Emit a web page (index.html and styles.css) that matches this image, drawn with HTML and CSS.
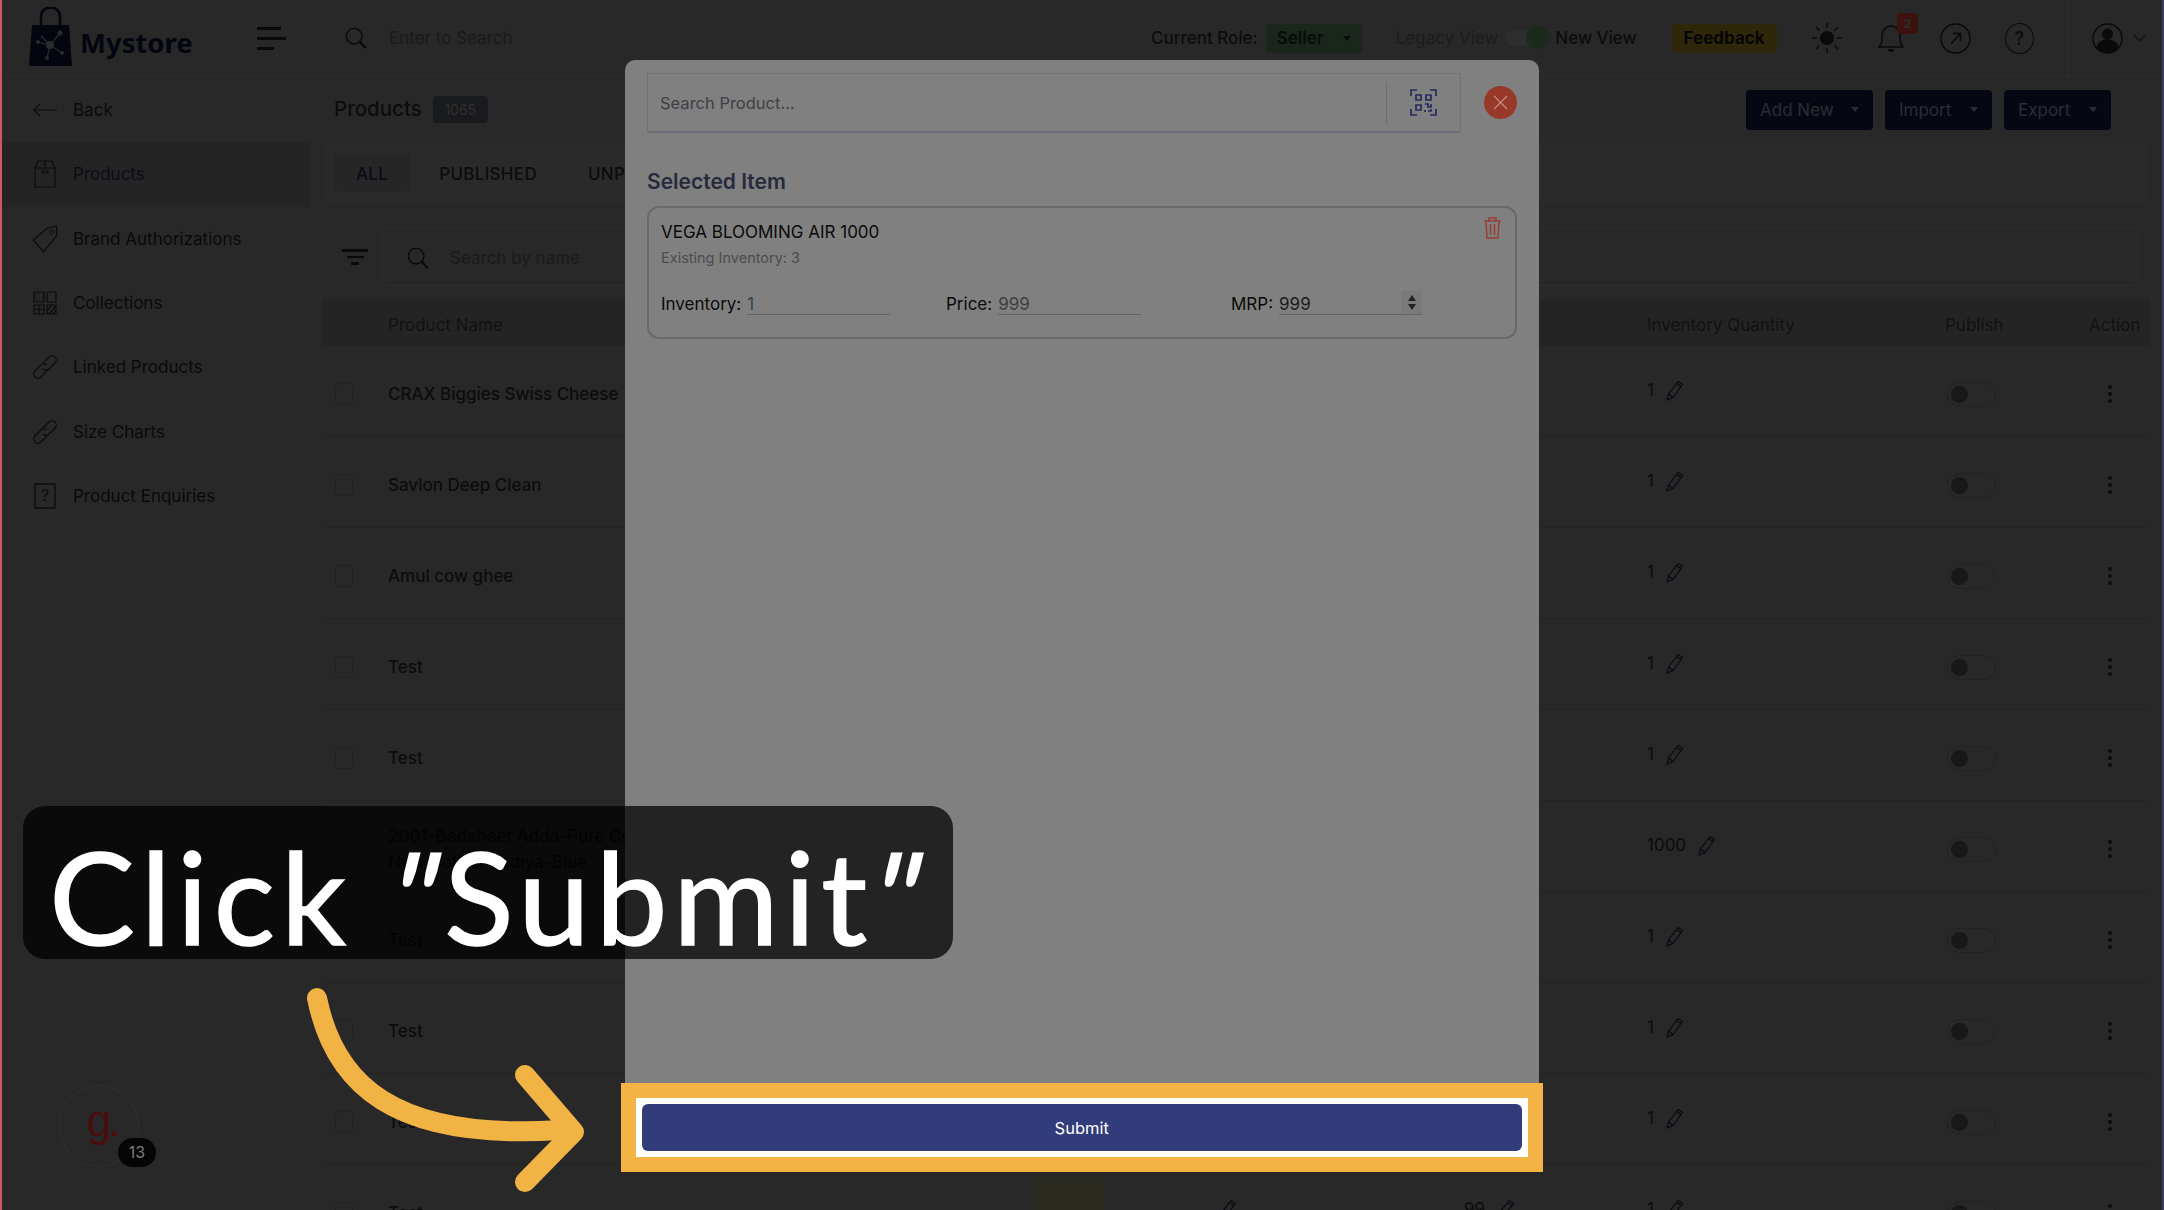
FILE: index.html
```html
<!DOCTYPE html>
<html lang="en">
<head>
  <meta charset="UTF-8" />
  <title>Mystore - Products</title>
  <link rel="stylesheet" href="styles.css">
</head>
<body>

  <svg class="defs" width="0" height="0">
    <symbol id="pencil" viewBox="0 0 18 22">
      <path d="M1 21l1.500-6L12 2.500l4.500 3L7 18.500zM2.500 15l4.500 3.500M10.500 4.500l4.500 3" fill="none" stroke="#0a0a14" stroke-width="1.200"/>
    </symbol>
    <symbol id="search" viewBox="0 0 24 24">
      <circle cx="10" cy="10" r="8.500" fill="none" stroke="#0a0a0a" stroke-width="1.500"/>
      <path d="M16 16l6.500 7" stroke="#0a0a0a" stroke-width="2.500"/>
    </symbol>
    <symbol id="dots" viewBox="0 0 6 20">
      <circle cx="3" cy="3" r="2" fill="#0c0c0c"/>
      <circle cx="3" cy="10" r="2" fill="#0c0c0c"/>
      <circle cx="3" cy="17" r="2" fill="#0c0c0c"/>
    </symbol>
    <symbol id="link" viewBox="0 0 26 26">
      <path d="M11 9l6-6a4 4 0 0 1 6 6l-6 6a4 4 0 0 1-6 0M15 17l-6 6a4 4 0 0 1-6-6l6-6a4 4 0 0 1 6 0" fill="none" stroke="#0c0c0c" stroke-width="1.200"/>
    </symbol>
  </svg>

  <div class="page">

    <!-- top bar -->
    <header class="topbar">
      <div class="brand">
        <svg class="brand-bag" width="43" height="59" viewBox="0 0 43 59">
          <path d="M12 18V9a9 8 0 0 1 19 0v9" fill="none" stroke="#04060f" stroke-width="2.500"/>
          <path d="M3 18h37l3 41H0z" fill="#04060f"/>
          <path d="M21 38L9 35M21 38l10-12M21 38l-9-9M21 38l12 8M21 38l-3 13" stroke="#2c2c2c" stroke-width="1.200"/>
          <circle cx="21" cy="38" r="4" fill="#2c2c2c"/>
          <circle cx="31" cy="26" r="2.500" fill="#2c2c2c"/>
          <circle cx="9" cy="35" r="2" fill="#2c2c2c"/>
          <circle cx="33" cy="46" r="2" fill="#2c2c2c"/>
          <circle cx="18" cy="51" r="2" fill="#2c2c2c"/>
        </svg>
        <span class="brand-name">Mystore</span>
        <div class="burger"><i></i><i></i><i></i></div>
      </div>
      <div class="top-search">
        <svg width="22" height="22"><use href="#search"/></svg>
        <span>Enter to Search</span>
      </div>
      <div class="top-tools">
        <span class="role-label">Current Role:</span>
        <span class="seller-btn">Seller <b class="caret"></b></span>
        <span class="legacy">Legacy View</span>
        <span class="view-toggle"><i></i></span>
        <span class="new-view">New View</span>
        <span class="feedback">Feedback</span>
        <svg class="sun" width="30" height="30" viewBox="0 0 30 30">
          <circle cx="15" cy="15" r="7" fill="#0a0a0a"/>
          <path d="M15 0v5M15 25v5M0 15h5M25 15h5M4 4l3.500 3.500M22.500 22.500L26 26M26 4l-3.500 3.500M7.500 22.500L4 26" stroke="#0a0a0a" stroke-width="1.500"/>
        </svg>
        <span class="bell">
          <svg width="26" height="30" viewBox="0 0 26 30">
            <path d="M1 24c3-3 3-6 3-11 0-6 4-10 9-10s9 4 9 10c0 5 0 8 3 11z" fill="none" stroke="#0a0a0a" stroke-width="1.500"/>
            <path d="M10 26h6a3 3 0 0 1-6 0z" fill="#0a0a0a"/>
          </svg>
          <em>2</em>
        </span>
        <svg class="round-icon" width="31" height="31" viewBox="0 0 31 31">
          <circle cx="15.500" cy="15.500" r="14.500" fill="none" stroke="#0a0a0a" stroke-width="1.500"/>
          <path d="M11 21l9-10M13 10.500h7.500V18" fill="none" stroke="#0a0a0a" stroke-width="1.500"/>
        </svg>
        <span class="help">?</span>
        <div class="user-box">
          <svg width="31" height="31" viewBox="0 0 31 31">
            <circle cx="15.500" cy="15.500" r="14.500" fill="none" stroke="#0a0a0a" stroke-width="1.500"/>
            <circle cx="15.500" cy="11" r="5.500" fill="#0a0a0a"/>
            <path d="M4.500 25a11 9 0 0 1 22 0 14 14 0 0 1-22 0z" fill="#0a0a0a"/>
          </svg>
          <svg width="13" height="8" viewBox="0 0 13 8"><path d="M1 1l5.500 6L12 1" fill="none" stroke="#111" stroke-width="1.200"/></svg>
        </div>
      </div>
    </header>

    <div class="main">

      <!-- sidebar -->
      <nav class="sidebar">
        <a class="nav-item">
          <svg width="24" height="14" viewBox="0 0 24 14"><path d="M24 7H1M7 1L1 7l6 6" fill="none" stroke="#0c0c0c" stroke-width="1.200"/></svg>
          Back
        </a>
        <a class="nav-item active">
          <svg width="24" height="28" viewBox="0 0 24 28"><path d="M2 8h20v19H2zM2 8l3-7h14l3 7M12 1v7M9 11h6v2H9z" fill="none" stroke="#0c0c0c" stroke-width="1.200"/></svg>
          Products
        </a>
        <a class="nav-item">
          <svg width="25" height="28" viewBox="0 0 25 28"><path d="M1 15L15 3l9-2v10L11 27z" fill="none" stroke="#0c0c0c" stroke-width="1.200"/><circle cx="19" cy="7" r="2" fill="none" stroke="#0c0c0c"/></svg>
          Brand Authorizations
        </a>
        <a class="nav-item">
          <svg width="24" height="24" viewBox="0 0 24 24" fill="none" stroke="#0c0c0c" stroke-width="1.200">
            <path d="M1 1h10v10H1zM14 1h9v10h-9zM1 14h10v9H1zM14 14h9v9h-9z"/>
            <path d="M3 3h1M6 3h1M9 3h1M3 6h1M6 6h1M9 6h1M3 9h1M6 9h1M9 9h1M6 14v9M1 18.500h10M14 20l5-6M16 23l7-8M20 23l3-4"/>
          </svg>
          Collections
        </a>
        <a class="nav-item">
          <svg width="26" height="26"><use href="#link"/></svg>
          Linked Products
        </a>
        <a class="nav-item">
          <svg width="26" height="26"><use href="#link"/></svg>
          Size Charts
        </a>
        <a class="nav-item">
          <svg width="22" height="26" viewBox="0 0 22 26"><path d="M1 1h20v24H1z" fill="none" stroke="#0c0c0c" stroke-width="1.300"/><text x="11" y="18" text-anchor="middle" class="enquiry-mark">?</text></svg>
          Product Enquiries
        </a>
      </nav>

      <!-- products list -->
      <section class="content">
        <div class="title-row">
          <h1>Products</h1>
          <span class="count">1065</span>
          <div class="actions">
            <span class="dark-btn">Add New <b class="caret"></b></span>
            <span class="dark-btn">Import <b class="caret"></b></span>
            <span class="dark-btn">Export <b class="caret"></b></span>
          </div>
        </div>

        <div class="tabs">
          <span class="tab selected">ALL</span>
          <span class="tab">PUBLISHED</span>
          <span class="tab">UNPUBLISHED</span>
        </div>

        <div class="filter-row">
          <div class="filter-icon"><i></i><i></i><i></i></div>
          <div class="filter-search">
            <svg width="22" height="22"><use href="#search"/></svg>
            <span>Search by name</span>
          </div>
        </div>

        <div class="tbl-row tbl-head">
          <span class="check"></span>
          <span class="span-four">Product Name</span>
          <span>Inventory Quantity</span>
          <span>Publish</span>
          <span>Action</span>
        </div>

        <div class="tbl-row">
          <span class="check"></span>
          <span class="name span-four">CRAX Biggies Swiss Cheese</span>
          <span class="qty">1 <svg width="18" height="22"><use href="#pencil"/></svg></span>
          <span class="switch"><i></i></span>
          <svg class="more" width="6" height="20"><use href="#dots"/></svg>
        </div>
        <div class="tbl-row">
          <span class="check"></span>
          <span class="name span-four">Savlon Deep Clean</span>
          <span class="qty">1 <svg width="18" height="22"><use href="#pencil"/></svg></span>
          <span class="switch"><i></i></span>
          <svg class="more" width="6" height="20"><use href="#dots"/></svg>
        </div>
        <div class="tbl-row">
          <span class="check"></span>
          <span class="name span-four">Amul cow ghee</span>
          <span class="qty">1 <svg width="18" height="22"><use href="#pencil"/></svg></span>
          <span class="switch"><i></i></span>
          <svg class="more" width="6" height="20"><use href="#dots"/></svg>
        </div>
        <div class="tbl-row">
          <span class="check"></span>
          <span class="name span-four">Test</span>
          <span class="qty">1 <svg width="18" height="22"><use href="#pencil"/></svg></span>
          <span class="switch"><i></i></span>
          <svg class="more" width="6" height="20"><use href="#dots"/></svg>
        </div>
        <div class="tbl-row">
          <span class="check"></span>
          <span class="name span-four">Test</span>
          <span class="qty">1 <svg width="18" height="22"><use href="#pencil"/></svg></span>
          <span class="switch"><i></i></span>
          <svg class="more" width="6" height="20"><use href="#dots"/></svg>
        </div>
        <div class="tbl-row">
          <span class="check"></span>
          <span class="name span-four">2001-Bedsheet Adda-Pure Cotton<br>New Cotton Dadiya-Blue</span>
          <span class="qty">1000 <svg width="18" height="22"><use href="#pencil"/></svg></span>
          <span class="switch"><i></i></span>
          <svg class="more" width="6" height="20"><use href="#dots"/></svg>
        </div>
        <div class="tbl-row">
          <span class="check"></span>
          <span class="name span-four">Test</span>
          <span class="qty">1 <svg width="18" height="22"><use href="#pencil"/></svg></span>
          <span class="switch"><i></i></span>
          <svg class="more" width="6" height="20"><use href="#dots"/></svg>
        </div>
        <div class="tbl-row">
          <span class="check"></span>
          <span class="name span-four">Test</span>
          <span class="qty">1 <svg width="18" height="22"><use href="#pencil"/></svg></span>
          <span class="switch"><i></i></span>
          <svg class="more" width="6" height="20"><use href="#dots"/></svg>
        </div>
        <div class="tbl-row">
          <span class="check"></span>
          <span class="name span-four">Test</span>
          <span class="qty">1 <svg width="18" height="22"><use href="#pencil"/></svg></span>
          <span class="switch"><i></i></span>
          <svg class="more" width="6" height="20"><use href="#dots"/></svg>
        </div>
        <div class="tbl-row">
          <span class="check"></span>
          <span class="name">Test</span>
          <span class="thumb"></span>
          <span class="qty"><svg width="18" height="22"><use href="#pencil"/></svg></span>
          <span class="qty">99 <svg width="18" height="22"><use href="#pencil"/></svg></span>
          <span class="qty">1 <svg width="18" height="22"><use href="#pencil"/></svg></span>
          <span class="switch"><i></i></span>
          <svg class="more" width="6" height="20"><use href="#dots"/></svg>
        </div>
      </section>
    </div>

    <!-- inventory modal -->
    <div class="modal">
      <div class="modal-body">
        <div class="modal-top">
          <div class="product-search">
            <span class="product-search-text">Search Product...</span>
            <span class="qr-cell">
              <svg width="27" height="27" viewBox="0 0 27 27" fill="none" stroke="#232b5e" stroke-width="1.700">
                <path d="M1 7V1h6M20 1h6v6M1 20v6h6M26 20v6h-6"/>
                <path d="M6 6h5v5H6zM16 6h5v5h-5zM6 16h5v5H6z"/>
                <path d="M15 15h3v3h3v-3M21 20v2h-3M15 21v2"/>
              </svg>
            </span>
          </div>
          <span class="close-btn">
            <svg width="15" height="15" viewBox="0 0 15 15"><path d="M1 1l13 13M14 1L1 14" stroke="#c89088" stroke-width="1.100"/></svg>
          </span>
        </div>

        <h2>Selected Item</h2>

        <div class="item-card">
          <div class="item-head">
            <div>
              <div class="item-name">VEGA BLOOMING AIR 1000</div>
              <div class="item-stock">Existing Inventory: 3</div>
            </div>
            <svg class="trash" width="19" height="22" viewBox="0 0 19 22" fill="none" stroke="#983c34" stroke-width="1.500">
              <path d="M1 4h17M6 4V1h7v3M3 4l1 17h11l1-17M7.500 7v11M11.500 7v11"/>
            </svg>
          </div>
          <div class="item-fields">
            <div class="field"><label>Inventory:</label><span class="field-value">1</span></div>
            <div class="field"><label>Price:</label><span class="field-value">999</span></div>
            <div class="field"><label>MRP:</label><span class="field-value dark">999<span class="spinner"><i class="up"></i><i class="down"></i></span></span></div>
          </div>
        </div>
      </div>

      <div class="modal-footer">
        <button class="submit-btn">Submit</button>
      </div>
    </div>

    <!-- floating help widget -->
    <div class="widget">
      <span class="widget-letter">g.</span>
      <span class="widget-count">13</span>
    </div>

    <!-- guide callout -->
    <div class="callout">Click <span class="quote">"</span>Submit<span class="quote">"</span></div>
    <svg class="guide-arrow" width="300" height="220" viewBox="0 0 300 220" fill="none" stroke="#f2b345" stroke-linecap="round" stroke-linejoin="round">
      <path d="M17 15C34 100 92 158 260 147" stroke-width="20"/>
      <path d="M225 92l49 57-49 50" stroke-width="20"/>
    </svg>

  </div>

</body>
</html>
```

FILE: styles.css
```css
body, html {
  margin: 0;
  height: 100%;
  overflow: hidden;
  font-family: Inter, "Liberation Sans", sans-serif;
  background-color: #282828;
  color: #0c0c0c;
}

.defs {
  display: block;
  height: 0;
}

.page {
  position: relative;
  height: 1210px;
  border-left: 2px solid #c85a64;
  border-right: 2px solid #3c3c66;
  box-sizing: border-box;
  overflow: hidden;
}

/* top bar */
.topbar {
  display: flex;
  height: 77px;
  border-bottom: 1px solid #2e2e2e;
  box-sizing: border-box;
}

.brand {
  display: flex;
  align-items: flex-start;
  width: 308px;
  padding: 7px 0 0 27px;
  box-sizing: border-box;
  border-right: 1px solid #2b2b2b;
  flex-shrink: 0;
}

.brand-name {
  margin: 18px 0 0 8px;
  font-size: 27.5px;
  line-height: 36px;
  font-weight: 700;
  color: #04060f;
  font-family: "Noto Sans", sans-serif;
}

.burger {
  display: flex;
  flex-direction: column;
  gap: 7px;
  margin: 20px 0 0 64px;
}

.burger i {
  display: block;
  width: 24px;
  height: 3px;
  background-color: #0a0a0a;
}

.burger i:nth-child(2) {
  width: 29px;
}

.burger i:nth-child(3) {
  width: 17px;
}

.top-search {
  display: flex;
  align-items: center;
  gap: 22px;
  width: 600px;
  height: 76px;
  margin-left: 12px;
  padding-left: 23px;
  box-sizing: border-box;
  font-size: 17px;
  color: #1a1a1a;
}

.top-tools {
  position: relative;
  display: flex;
  align-items: center;
  flex: 1;
  height: 76px;
  padding-left: 229px;
  font-size: 17px;
  white-space: nowrap;
}

.role-label {
  font-weight: 500;
  margin-right: 8px;
}

.seller-btn {
  display: flex;
  align-items: center;
  justify-content: space-between;
  width: 96px;
  height: 29px;
  padding: 0 11px;
  box-sizing: border-box;
  border-radius: 4px;
  background-color: #1a261b;
  font-weight: 600;
  color: #080c08;
}

.caret {
  display: inline-block;
  border-left: 4px solid transparent;
  border-right: 4px solid transparent;
  border-top: 5px solid currentColor;
}

.legacy {
  margin-left: 34px;
  color: #1c1c1c;
}

.view-toggle {
  position: relative;
  width: 44px;
  height: 16px;
  margin-left: 7px;
  border-radius: 8px;
  background-color: #2e2e2e;
}

.view-toggle i {
  position: absolute;
  right: 0;
  top: -4px;
  width: 23px;
  height: 23px;
  border-radius: 50%;
  background-color: #1b2a1c;
}

.new-view {
  margin-left: 6px;
  font-weight: 500;
}

.feedback {
  margin-left: 35px;
  width: 105px;
  height: 29px;
  line-height: 29px;
  text-align: center;
  border-radius: 4px;
  background-color: #2f2709;
  font-weight: 700;
  color: #060606;
}

.sun {
  margin-left: 35px;
}

.bell {
  position: relative;
  display: flex;
  margin-left: 36px;
}

.bell em {
  position: absolute;
  left: 19px;
  top: -10px;
  width: 21px;
  height: 21px;
  line-height: 21px;
  text-align: center;
  border-radius: 4px;
  background-color: #3c120e;
  color: #2c2c2c;
  font-size: 12px;
  font-style: normal;
  font-weight: 700;
}

.round-icon {
  margin-left: 36px;
}

.help {
  width: 27px;
  height: 29px;
  line-height: 29px;
  margin-left: 34px;
  text-align: center;
  border: 1.5px solid #0a0a0a;
  border-radius: 50%;
  font-size: 18px;
  font-weight: 500;
}

.user-box {
  display: flex;
  align-items: center;
  gap: 10px;
  height: 76px;
  margin-left: 33px;
  padding-left: 24px;
  border-left: 1px solid #2f2f2f;
}

/* main area */
.main {
  display: flex;
}

.sidebar {
  width: 308px;
  flex-shrink: 0;
  padding-top: 1px;
}

.nav-item {
  display: flex;
  align-items: center;
  height: 64.3px;
  padding-left: 30px;
  font-size: 17px;
  color: #0a0a0a;
}

.nav-item svg {
  width: 26px;
  margin-right: 15px;
}

.nav-item.active {
  background-color: #242424;
  color: #0c0d18;
}

.enquiry-mark {
  font-size: 16px;
  fill: #0c0c0c;
}

.content {
  width: 1828px;
  margin-left: 12px;
}

.title-row {
  display: flex;
  align-items: center;
  height: 63px;
  padding: 0 0 2px 12px;
}

.title-row h1 {
  margin: 0;
  font-size: 20.5px;
  font-weight: 500;
  color: #0c0c0c;
}

.count {
  margin: 2px 0 0 11px;
  width: 55px;
  height: 27px;
  line-height: 28px;
  text-align: center;
  border-radius: 4px;
  background-color: #191a1d;
  color: #303030;
  font-size: 14px;
}

.actions {
  display: flex;
  gap: 12px;
  margin: 2px 0 0 auto;
  padding-right: 39px;
}

.dark-btn {
  display: flex;
  align-items: center;
  justify-content: space-between;
  width: 107px;
  height: 40px;
  padding: 0 14px;
  box-sizing: border-box;
  border-radius: 4px;
  background-color: #050812;
  color: #2c2d32;
  font-size: 17px;
}

.dark-btn:first-child {
  width: 127px;
}

.tabs {
  display: flex;
  align-items: center;
  height: 61px;
  padding-left: 12px;
  background-color: #2a2a2a;
  font-size: 17px;
  letter-spacing: 0.3px;
  font-weight: 500;
}

.tab {
  height: 37px;
  line-height: 39px;
  padding: 2px 22px 0;
  margin-right: 7px;
}

.tab.selected {
  background-color: #262626;
  border-radius: 6px;
  color: #0a0b18;
}

.filter-row {
  display: flex;
  align-items: center;
  height: 96px;
  padding: 12px 0 0 20px;
  box-sizing: border-box;
}

.filter-icon {
  display: flex;
  flex-direction: column;
  align-items: center;
  gap: 4px;
  width: 26px;
}

.filter-icon i {
  display: block;
  width: 26px;
  height: 2.500px;
  background-color: #0a0a0a;
}

.filter-icon i:nth-child(2) {
  width: 17px;
}

.filter-icon i:nth-child(3) {
  width: 8px;
}

.filter-search {
  display: flex;
  align-items: center;
  gap: 21px;
  width: 1756px;
  height: 58px;
  margin-left: 14px;
  padding: 2px 0 0 24px;
  box-sizing: border-box;
  border: 1px solid #2f2f2f;
  border-radius: 6px;
  font-size: 17px;
  color: #1a1a1a;
}

/* table */
.tbl-row {
  display: grid;
  grid-template-columns: 53px 647px 184px 245px 183px 298px 144px 61px;
  align-items: center;
  height: 91px;
  padding: 6px 0 0 13px;
  border-bottom: 1px solid #232323;
  box-sizing: border-box;
  font-size: 17px;
}

.tbl-head {
  height: 47px;
  padding-top: 4px;
  background-color: #242424;
  border-bottom: none;
  color: #121212;
}

.span-four {
  grid-column: span 4;
}

.check {
  width: 18px;
  height: 22px;
  border: 1px solid #222;
  border-radius: 4px;
  box-sizing: border-box;
}

.name {
  font-weight: 500;
  line-height: 26px;
  color: #0c0c0c;
}

.qty {
  display: flex;
  align-items: center;
  gap: 12px;
  margin-top: -8px;
  color: #0c0c0c;
}

.thumb {
  width: 70px;
  height: 66px;
  margin-top: -6px;
  border-radius: 4px;
  background-color: #29291f;
}

.switch {
  display: flex;
  align-items: center;
  width: 49px;
  height: 25px;
  padding-left: 3px;
  box-sizing: border-box;
  border: 1px solid #222;
  border-radius: 13px;
  margin-left: 2px;
}

.switch i {
  width: 17px;
  height: 17px;
  border-radius: 50%;
  background-color: #181818;
}

.more {
  margin-left: 18px;
}

/* modal */
.modal {
  position: absolute;
  left: 623px;
  top: 60px;
  width: 914px;
  height: 1112px;
  display: flex;
  flex-direction: column;
  background-color: #808080;
  border-radius: 10px 10px 0 0;
}

.modal-body {
  flex: 1;
  padding: 13px 22px 0 22px;
}

.modal-top {
  display: flex;
  align-items: center;
  justify-content: space-between;
}

.product-search {
  display: flex;
  align-items: center;
  justify-content: space-between;
  width: 814px;
  height: 60px;
  box-sizing: border-box;
  padding-left: 12px;
  border: 1px solid #737373;
  border-bottom: 2px solid #6d6d78;
}

.product-search-text {
  font-size: 16.500px;
  color: #3c4046;
}

.qr-cell {
  display: flex;
  align-items: center;
  justify-content: center;
  width: 73px;
  height: 42px;
  border-left: 1px solid #6e6e6e;
}

.close-btn {
  display: flex;
  align-items: center;
  justify-content: center;
  width: 33px;
  height: 33px;
  margin-top: -2px;
  border-radius: 50%;
  background-color: #983829;
}

.modal h2 {
  margin: 35px 0 10px;
  font-size: 21px;
  line-height: 28px;
  font-weight: 600;
  color: #262a3a;
}

.item-card {
  height: 133px;
  padding: 12px 11px 12px 12px;
  box-sizing: border-box;
  border: 2px solid #696969;
  border-radius: 12px;
}

.item-head {
  display: flex;
  justify-content: space-between;
  height: 72px;
}

.item-name {
  font-size: 17px;
  line-height: 24px;
  color: #0a0a0a;
}

.item-stock {
  margin-top: 4px;
  font-size: 14.500px;
  line-height: 20px;
  color: #4c4c4e;
}

.trash {
  margin: -3px 2px 0 0;
}

.item-fields {
  display: flex;
  font-size: 17px;
}

.field {
  display: flex;
  align-items: baseline;
  gap: 6px;
  width: 285px;
  flex-shrink: 0;
}

.field label {
  color: #0a0a0a;
  line-height: 24px;
}

.field-value {
  position: relative;
  width: 143px;
  height: 22px;
  line-height: 24px;
  border-bottom: 1px solid #636363;
  color: #3e3e3e;
}

.spinner {
  position: absolute;
  right: 0;
  top: -1px;
  display: flex;
  flex-direction: column;
  align-items: center;
  justify-content: center;
  gap: 3px;
  width: 21px;
  height: 23px;
  background-color: #7a7a7a;
}

.spinner i {
  border-left: 4px solid transparent;
  border-right: 4px solid transparent;
}

.spinner .up {
  border-bottom: 6px solid #222;
}

.spinner .down {
  border-top: 6px solid #222;
}

.field-value.dark {
  color: #1c1c1c;
}

.modal-footer {
  position: relative;
  height: 89px;
  margin: 0 -4px 0 -4.500px;
  padding: 6px 6px;
  box-sizing: border-box;
  border: 15px solid #f3b345;
  background-color: white;
}

.submit-btn {
  display: block;
  width: 100%;
  height: 47px;
  border: none;
  border-radius: 6px;
  background-color: #323c7a;
  color: white;
  font-family: inherit;
  font-size: 16.500px;
  font-weight: 400;
}

/* floating widget */
.widget {
  position: absolute;
  left: 57px;
  top: 1085px;
  width: 80px;
  height: 82px;
  padding-left: 6px;
  border: 1px solid #303030;
  border-radius: 50%;
  box-sizing: border-box;
  text-align: center;
}

.widget-letter {
  font-size: 44px;
  line-height: 70px;
  letter-spacing: -3px;
  color: #4a0e0e;
  font-family: "Liberation Sans", sans-serif;
}

.widget-count {
  position: absolute;
  left: 58px;
  top: 52px;
  width: 38px;
  height: 29px;
  line-height: 29px;
  border-radius: 15px;
  background-color: #050505;
  color: #7c7c7c;
  font-size: 16px;
}

/* guide callout */
.callout {
  position: absolute;
  left: 21px;
  top: 806px;
  width: 930px;
  height: 153px;
  line-height: 180px;
  border-radius: 22px;
  background-color: rgba(0, 0, 0, 0.73);
  color: white;
  font-family: Lato, sans-serif;
  font-size: 128px;
  letter-spacing: 6px;
  -webkit-text-stroke: 1.5px white;
  text-align: center;
  white-space: nowrap;
  overflow: hidden;
}

.quote {
  display: inline-block;
  transform: skewX(-14deg);
}

.guide-arrow {
  position: absolute;
  left: 298px;
  top: 983px;
}
```
